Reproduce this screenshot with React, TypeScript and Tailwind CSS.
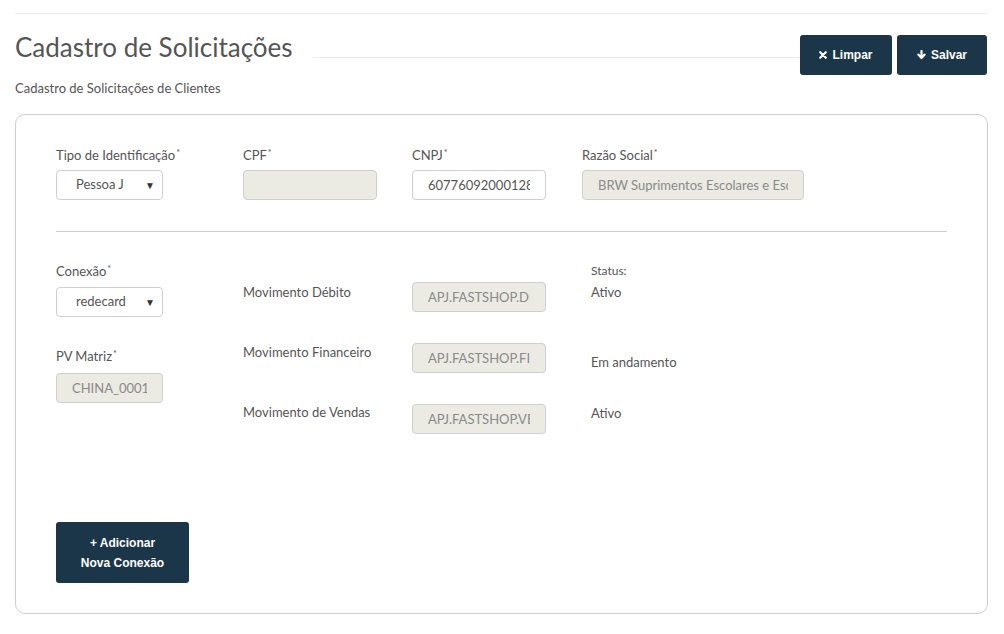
const font = { fontFamily: "Lato, 'Open Sans', sans-serif" };

function Field({ value, disabled, className = "" }: { value: string; disabled?: boolean; className?: string }) {
  return (
    <input
      readOnly
      value={value}
      className={`h-[30px] rounded-[4px] border border-[#cfcfcf] px-[15px] text-[13px] outline-none ${
        disabled ? "bg-[#ebebe4] text-[#8a8a8a]" : "bg-white text-[#555]"
      } ${className}`}
    />
  );
}

function Select({ value }: { value: string }) {
  return (
    <div className="flex h-[30px] w-[107px] items-center justify-between rounded-[4px] border border-[#cfcfcf] bg-white pl-[19px] pr-[7px] text-[13px] text-[#555]">
      <span>{value}</span>
      <span className="text-[10px] text-[#333]">▼</span>
    </div>
  );
}

function Label({ children, req, className = "" }: { children: React.ReactNode; req?: boolean; className?: string }) {
  return (
    <div className={`h-[18px] text-[13px] leading-[18px] text-[#555] ${className}`}>
      {children}
      {req && <span className="relative top-[-4px] ml-[1px] text-[9px] leading-[0]">*</span>}
    </div>
  );
}

export default function App() {
  return (
    <div className="min-h-screen bg-white pl-[15px] pr-[16px] pt-[13px]" style={font}>
      <div className="border-t border-[#ececec]" />

      {/* header */}
      <div className="mt-[17px] flex items-start">
        <h1 className="text-[26px] leading-[32px] text-[#555]">Cadastro de Solicitações</h1>
        <div className="ml-[20px] mt-[26px] flex-1 border-t border-[#ececec]" />
        <div className="mr-[1px] mt-[4px] flex gap-[5px]" style={{ fontFamily: "'Liberation Sans', Arial, sans-serif" }}>
          <button className="flex h-[40px] w-[92px] items-center justify-center gap-[5px] rounded-[3px] bg-[#1c3649] text-[12px] font-bold text-white">
            <svg width="8" height="8" viewBox="0 0 10 10">
              <path d="M1.5 1.5l7 7M8.5 1.5l-7 7" stroke="white" strokeWidth="2.6" strokeLinecap="round" />
            </svg>
            Limpar
          </button>
          <button className="flex h-[40px] w-[90px] items-center justify-center gap-[5px] rounded-[3px] bg-[#1c3649] text-[12px] font-bold text-white">
            <svg width="9" height="10" viewBox="0 0 10 11">
              <path d="M5 1v7M1.5 5l3.5 4 3.5-4" stroke="white" strokeWidth="2.4" fill="none" strokeLinecap="round" strokeLinejoin="round" />
            </svg>
            Salvar
          </button>
        </div>
      </div>
      <p className="mt-[4px] text-[13px] leading-[18px] text-[#555]">Cadastro de Solicitações de Clientes</p>

      {/* card */}
      <div className="mt-[17px] rounded-[10px] border border-[#cfcfcf] px-[40px] pb-[30px] pt-[31px]">
        <div className="flex">
          <div className="w-[187px]">
            <Label req>Tipo de Identificação</Label>
            <div className="mt-[6px]">
              <Select value="Pessoa J" />
            </div>
          </div>
          <div className="w-[169px]">
            <Label req>CPF</Label>
            <Field value="" disabled className="mt-[6px] w-[134px]" />
          </div>
          <div className="w-[170px]">
            <Label req>CNPJ</Label>
            <Field value="60776092000128" className="mt-[6px] w-[134px]" />
          </div>
          <div>
            <Label req>Razão Social</Label>
            <Field value="BRW Suprimentos Escolares e Escritório" disabled className="mt-[6px] w-[222px]" />
          </div>
        </div>

        <div className="mt-[31px] border-t border-[#cfcfcf]" />

        <div className="flex">
          <div className="w-[187px]">
            <Label req className="mt-[30px]">Conexão</Label>
            <div className="mt-[7px]">
              <Select value="redecard" />
            </div>
            <Label req className="mt-[30px]">PV Matriz</Label>
            <Field value="CHINA_0001" disabled className="mt-[8px] w-[107px]" />
          </div>
          <div className="w-[169px]">
            <Label className="mt-[51px]">Movimento Débito</Label>
            <Label className="mt-[42px]">Movimento Financeiro</Label>
            <Label className="mt-[42px]">Movimento de Vendas</Label>
          </div>
          <div className="flex w-[179px] flex-col">
            <Field value="APJ.FASTSHOP.DEBITO" disabled className="mt-[50px] w-[134px]" />
            <Field value="APJ.FASTSHOP.FINANCEIRO" disabled className="mt-[31px] w-[134px]" />
            <Field value="APJ.FASTSHOP.VENDAS" disabled className="mt-[31px] w-[134px]" />
          </div>
          <div>
            <div className="mt-[30px] text-[12px] leading-[18px] text-[#555]">Status:</div>
            <Label className="mt-[3px]">Ativo</Label>
            <Label className="mt-[52px]">Em andamento</Label>
            <Label className="mt-[33px]">Ativo</Label>
          </div>
        </div>

        <button
          className="mt-[88px] flex h-[61px] w-[133px] flex-col items-center justify-center rounded-[3px] bg-[#1c3649] text-[12px] font-bold leading-[20px] text-white"
          style={{ fontFamily: "'Liberation Sans', Arial, sans-serif" }}
        >
          <span>+ Adicionar</span>
          <span>Nova Conexão</span>
        </button>
      </div>
    </div>
  );
}
